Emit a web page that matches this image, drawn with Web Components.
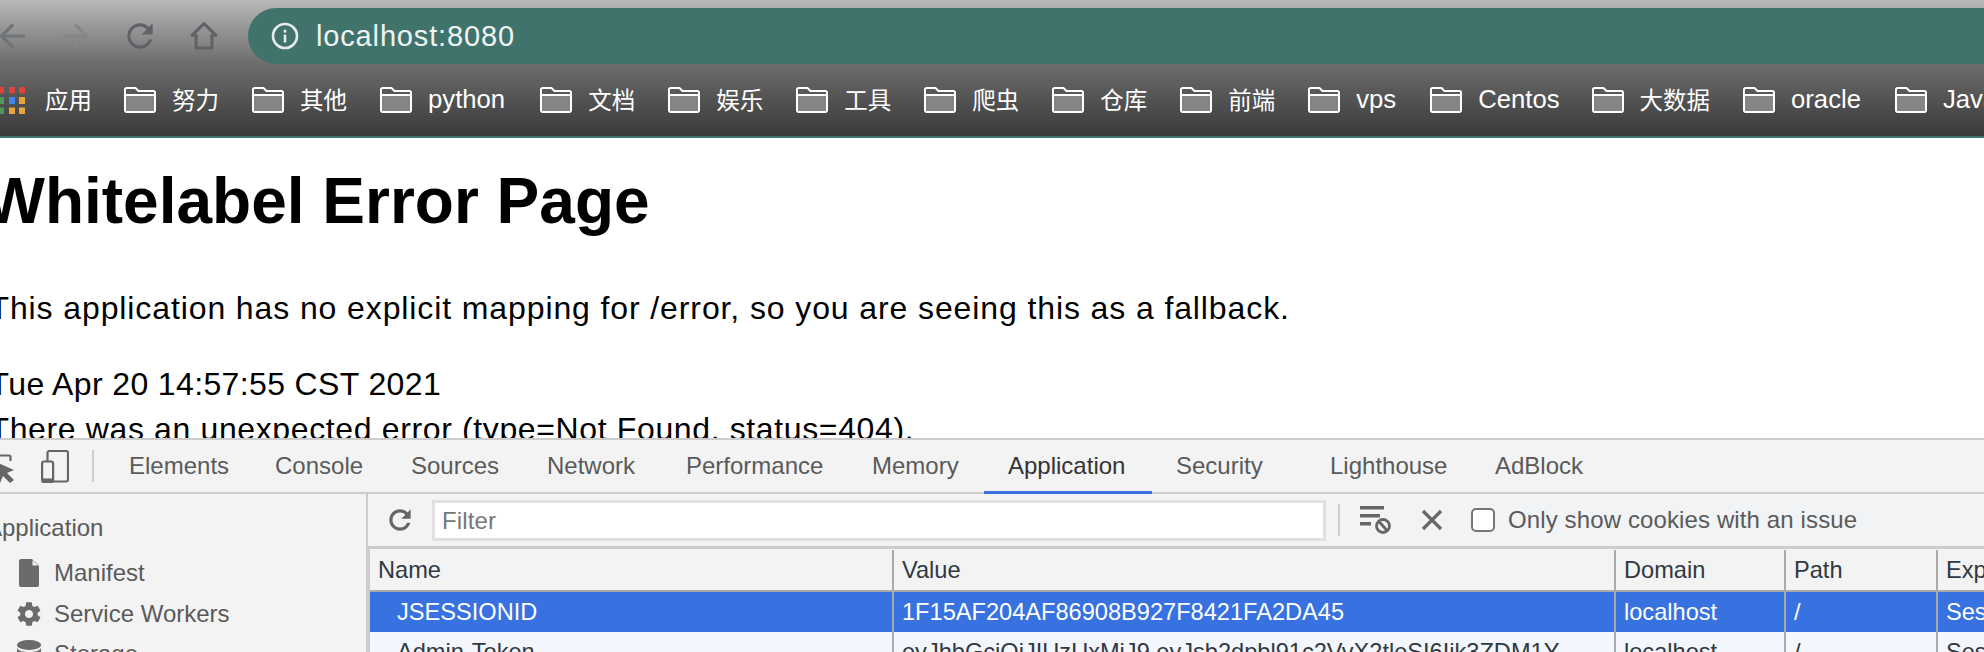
<!DOCTYPE html>
<html><head><meta charset="utf-8">
<style>
html,body{margin:0;padding:0;width:1984px;height:652px;overflow:hidden;background:#fff;font-family:"Liberation Sans","Noto Sans CJK SC",sans-serif}
body{display:flex;flex-direction:column}
</style></head><body>
<browser-chrome>
  <bm-item kind="apps" label="应用"></bm-item>
  <bm-item label="努力"></bm-item><bm-item label="其他"></bm-item><bm-item latin label="python"></bm-item><bm-item label="文档"></bm-item><bm-item label="娱乐"></bm-item><bm-item label="工具"></bm-item><bm-item label="爬虫"></bm-item><bm-item label="仓库"></bm-item><bm-item label="前端"></bm-item><bm-item latin style="margin-right:34px" label="vps"></bm-item><bm-item latin style="margin-right:32px" label="Centos"></bm-item><bm-item label="大数据"></bm-item><bm-item latin style="margin-right:34px" label="oracle"></bm-item><bm-item latin label="Java"></bm-item>
</browser-chrome>
<error-page></error-page>
<dev-tools></dev-tools>
<script>
class BrowserChrome extends HTMLElement{constructor(){super();this.attachShadow({mode:'open'}).innerHTML=`<style>
:host{display:block;height:136px;flex:none;border-bottom:2px solid #41736d;overflow:hidden;background:linear-gradient(#b8b8b8,#6c6c6c 47%,#393939)}
.top{display:flex;height:56px;padding-top:8px;margin-left:-20px}
.nav{width:64px;height:56px;display:flex;align-items:center;justify-content:center;flex:none}
.nav svg{width:38px;height:38px}
.bar{flex:1;margin-left:12px;background:#41736d;border-radius:28px 0 0 28px;display:flex;align-items:center;padding-left:23px;color:#eef3f2;font-size:29px;letter-spacing:.85px}
.bar svg{width:28px;height:28px;margin-right:17px;flex:none}
.marks{display:flex;height:72px;align-items:center;white-space:nowrap}
</style>
<div class="top">
<span class="nav"><svg viewBox="0 0 24 24"><path fill="#707377" d="M20 11H7.83l5.59-5.59L12 4l-8 8 8 8 1.41-1.41L7.83 13H20v-2z"/></svg></span>
<span class="nav"><svg viewBox="0 0 24 24"><path fill="#84868a" d="M12 4l-1.41 1.41L16.17 11H4v2h12.17l-5.58 5.59L12 20l8-8z"/></svg></span>
<span class="nav"><svg viewBox="0 0 24 24"><path fill="#5f6368" d="M17.65 6.35C16.2 4.9 14.21 4 12 4c-4.42 0-7.99 3.58-7.99 8s3.57 8 7.99 8c3.73 0 6.84-2.55 7.73-6h-2.08c-.82 2.33-3.04 4-5.65 4-3.31 0-6-2.69-6-6s2.69-6 6-6c1.66 0 3.14.69 4.22 1.78L13 11h7V4l-2.35 2.35z"/></svg></span>
<span class="nav"><svg viewBox="0 0 24 24"><path fill="none" stroke="#5f6368" stroke-width="1.9" stroke-linejoin="round" d="M12 4.2 4.4 11.6H7V19.6H17V11.6H19.6Z"/></svg></span>
<div class="bar"><svg viewBox="0 0 28 28"><circle cx="14" cy="14" r="12" fill="none" stroke="#e6ecea" stroke-width="2.6"/><rect x="12.7" y="12.5" width="2.6" height="8" fill="#e6ecea"/><rect x="12.7" y="7.8" width="2.6" height="2.8" fill="#e6ecea"/></svg><span>localhost:8080</span></div>
</div>
<div class="marks"><slot></slot></div>`}}
customElements.define('browser-chrome',BrowserChrome);

class BmItem extends HTMLElement{connectedCallback(){if(this.shadowRoot)return;
const apps=this.getAttribute('kind')==='apps';
const latin=this.hasAttribute('latin');
const icon=apps?`<svg class="apps" viewBox="0 0 25 27" width="25" height="27">
<rect x="-2" y="0" width="6" height="6.5" fill="#d9463c"/><rect x="9" y="0" width="6" height="6.5" fill="#d9463c"/><rect x="19" y="0" width="6" height="6.5" fill="#d9463c"/>
<rect x="-2" y="10" width="6" height="7" fill="#4f9a5b"/><rect x="9" y="10" width="6" height="7" fill="#3f86ea"/><rect x="19" y="10" width="6" height="7" fill="#e8a63a"/>
<rect x="-2" y="20.5" width="6" height="6.5" fill="#4f9a5b"/><rect x="9" y="20.5" width="6" height="6.5" fill="#e8a63a"/><rect x="19" y="20.5" width="6" height="6.5" fill="#e8a63a"/></svg>`
:`<svg viewBox="0 0 32 26" width="32" height="26"><path d="M2 8H30V23.5a1.5 1.5 0 0 1-1.500 1.500H2.500A1.500 1.500 0 0 1 1 23.500Z" fill="#858585"/><path fill="none" stroke="#fff" stroke-width="2" stroke-linejoin="round" d="M2.500 1H11.500L14.500 4H29.500A1.500 1.500 0 0 1 31 5.500V23.500A1.500 1.500 0 0 1 29.500 25H2.500A1.500 1.500 0 0 1 1 23.500V2.500A1.500 1.500 0 0 1 2.500 1ZM1 8H31"/></svg>`;
this.attachShadow({mode:'open'}).innerHTML=`<style>
:host{display:flex;align-items:center;gap:${apps?20:16}px;margin-right:${apps?32:latin?35:33}px;color:#fff;font-size:${latin?25.7:23.5}px;flex:none}
svg{flex:none;display:block}
span{margin-bottom:${latin?1:3}px}
</style>${icon}<span>${this.getAttribute('label')}</span>`}}
customElements.define('bm-item',BmItem);

class ErrorPage extends HTMLElement{constructor(){super();this.attachShadow({mode:'open'}).innerHTML=`<style>
:host{display:block;height:300px;flex:none;overflow:hidden;background:#fff;color:#000}
h1{margin:0 0 0 -15.5px;padding-top:26px;font-size:64px;line-height:74px;font-weight:700}
p{margin:0 0 0 -10.5px;font-size:32px;line-height:45px}
.a{margin-top:48px;letter-spacing:.89px}.b{margin-top:31px;letter-spacing:.37px}.c{letter-spacing:.63px}
</style><h1>Whitelabel Error Page</h1>
<p class="a">This application has no explicit mapping for /error, so you are seeing this as a fallback.</p>
<p class="b">Tue Apr 20 14:57:55 CST 2021</p><p class="c">There was an unexpected error (type=Not Found, status=404).</p>`}}
customElements.define('error-page',ErrorPage);

class DevTab extends HTMLElement{connectedCallback(){if(this.shadowRoot)return;this.attachShadow({mode:'open'}).innerHTML=`<style>
:host{display:flex;align-items:center;padding-left:24px;height:100%;box-sizing:border-box;color:#5a5a5a;flex:none}
:host([active]){color:#333;border-bottom:3px solid #3a70e0;height:54px;align-self:flex-start}
</style><slot></slot>`}}
customElements.define('dev-tab',DevTab);

class DevTools extends HTMLElement{constructor(){super();this.attachShadow({mode:'open'}).innerHTML=`<style>
:host{display:block;flex:1;min-height:0;overflow:hidden;background:#f3f3f3;font-size:24px;border-top:2px solid #ccc;color:#5a5a5a}
svg{display:block;flex:none}
.tabs{height:52px;display:flex;align-items:center;border-bottom:2px solid #ccc;white-space:nowrap}
.ic{display:flex;align-items:center;height:100%;margin-left:-20px;width:125px;flex:none}
.sep{width:2px;height:32px;background:#ccc;flex:none}
.main{display:grid;grid-template-columns:368px 1fr;height:200px}
.side{border-right:2px solid #ccc;padding-top:16px;white-space:nowrap}
.side .h{margin-left:-14px;height:36px;line-height:36px}
.it{display:flex;align-items:center;height:40.500px}
.it .g{width:54px;display:flex;justify-content:center;flex:none;padding-left:4px;box-sizing:border-box}
.it.first{margin-top:7px}
.tool{height:52px;display:flex;align-items:center;background:#f1f3f5;white-space:nowrap;letter-spacing:.12px}
.inp{width:894px;height:41px;box-sizing:border-box;border:3px solid #e0e0e0;background:#fff;color:#777;padding:1px 0 0 7px;display:flex;align-items:center;flex:none}
.tbl{border-top:3px solid #ccc;border-left:2px solid #ccc;color:#303942;white-space:nowrap;font-size:23.6px}
.r{display:grid;grid-template-columns:522px 722px 170px 152px 1fr}
.r>div{overflow:hidden;box-sizing:border-box;padding-left:8px;display:flex;align-items:center}
.r>div+div{border-left:2px solid #aaa}
.hd{height:40px;border-bottom:2px solid #aaa;padding-top:1px;box-sizing:content-box}
.sel{height:40px;background:#3871e0;color:#fff}
.alt{height:41px;background:#f3f7fd}
.n{padding-left:27px!important}
</style>
<div class="tabs"><div class="ic">
<svg width="34" height="34" viewBox="0 0 34 34"><path fill="none" stroke="#666" stroke-width="2.200" d="M0 6.500H29a1.500 1.500 0 0 1 1.500 1.500V12"/><path fill="#666" d="M14 12 L34 21 L27 24 L34 31 L30 34 L23 27 L20 34Z"/></svg>
<svg style="margin-left:27px" width="28" height="33" viewBox="0 0 28 33"><path fill="none" stroke="#666" stroke-width="2.200" d="M6.500 11V3a2 2 0 0 1 2-2H25a2 2 0 0 1 2 2V29.500a2 2 0 0 1-2 2H12"/><rect x="1.100" y="11.500" width="11" height="20.400" rx="2" fill="none" stroke="#666" stroke-width="2.200"/><rect x="1" y="28.500" width="11" height="4" fill="#666"/></svg>
<span class="sep" style="margin-left:23px"></span></div>
<dev-tab style="width:146px">Elements</dev-tab><dev-tab style="width:136px">Console</dev-tab><dev-tab style="width:136px">Sources</dev-tab><dev-tab style="width:139px">Network</dev-tab><dev-tab style="width:186px">Performance</dev-tab><dev-tab style="width:136px">Memory</dev-tab><dev-tab active style="width:168px">Application</dev-tab><dev-tab style="width:154px">Security</dev-tab><dev-tab style="width:165px">Lighthouse</dev-tab><dev-tab>AdBlock</dev-tab></div>
<div class="main"><div class="side"><div class="h">Application</div>
<div class="it first"><span class="g"><svg width="20" height="28" viewBox="0 0 20 28"><path fill="#6b6b6b" d="M2 0H13L20 7V26a2 2 0 0 1-2 2H2a2 2 0 0 1-2-2V2a2 2 0 0 1 2-2Z"/><path fill="#f3f3f3" d="M13.500 1 19 6.500H13.500Z"/></svg></span>Manifest</div>
<div class="it"><span class="g"><svg width="28" height="28" viewBox="0 0 24 24"><path fill="#6b6b6b" d="M19.430 12.980c.04-.32.07-.64.07-.98s-.03-.66-.07-.98l2.110-1.650c.19-.15.24-.42.12-.64l-2-3.460c-.12-.22-.39-.3-.61-.22l-2.490 1c-.52-.4-1.080-.73-1.690-.98l-.38-2.650C14.460 2.180 14.250 2 14 2h-4c-.25 0-.46.18-.49.42l-.38 2.650c-.61.25-1.170.59-1.690.98l-2.490-1c-.23-.09-.49 0-.61.22l-2 3.460c-.13.22-.07.49.12.64l2.110 1.650c-.04.32-.07.65-.07.98s.03.66.07.98l-2.110 1.650c-.19.15-.24.42-.12.64l2 3.460c.12.22.39.3.61.22l2.490-1c.52.4 1.080.73 1.690.98l.38 2.650c.03.24.24.42.49.42h4c.25 0 .46-.18.49-.42l.38-2.650c.61-.25 1.170-.59 1.690-.98l2.490 1c.23.09.49 0 .61-.22l2-3.460c.12-.22.07-.49-.12-.64l-2.110-1.650zM12 15.500c-1.930 0-3.500-1.570-3.500-3.500s1.570-3.500 3.500-3.500 3.500 1.570 3.500 3.500-1.570 3.500-3.500 3.500z"/></svg></span>Service Workers</div>
<div class="it"><span class="g"><svg width="24" height="28" viewBox="0 0 24 28"><ellipse cx="12" cy="5" rx="12" ry="5" fill="#6b6b6b"/><path fill="#6b6b6b" d="M0 8c2 3 5 4 12 4s10-1 12-4v6c-2 3-5 4-12 4S2 17 0 14Z"/></svg></span>Storage</div>
</div>
<div><div class="tool">
<svg style="margin-left:16px" width="32" height="32" viewBox="0 0 24 24"><path fill="#666" d="M17.650 6.350C16.200 4.900 14.210 4 12 4c-4.420 0-7.990 3.580-7.990 8s3.570 8 7.990 8c3.730 0 6.840-2.550 7.730-6h-2.500c-.82 2.330-2.620 3.600-5.230 3.600-3.100 0-5.600-2.500-5.600-5.600S8.900 6.400 12 6.400c1.660 0 2.900.6 4 1.700L13 11h7V4l-2.350 2.350z"/></svg>
<div class="inp" style="margin-left:16px">Filter</div>
<span class="sep" style="margin-left:12px"></span>
<svg style="margin-left:20px" width="31" height="29" viewBox="0 0 31 29"><path fill="#666" d="M0 0H24V3.500H0ZM0 8H20V11.500H0ZM0 16H11V19.500H0Z"/><circle cx="23" cy="20" r="6.500" fill="none" stroke="#666" stroke-width="2.800"/><path stroke="#666" stroke-width="2.800" d="M19 15.500 27 24.500"/></svg>
<svg style="margin-left:30px" width="22" height="22" viewBox="0 0 22 22"><path stroke="#666" stroke-width="3.200" d="M2 2 20 20M20 2 2 20"/></svg>
<span style="margin-left:28px;width:24px;height:24px;box-sizing:border-box;border:2px solid #767676;border-radius:5px;background:#fff;flex:none"></span>
<span style="margin-left:13px">Only show cookies with an issue</span>
</div>
<div class="tbl">
<div class="r hd"><div>Name</div><div>Value</div><div>Domain</div><div>Path</div><div>Expires</div></div>
<div class="r sel"><div class="n">JSESSIONID</div><div>1F15AF204AF86908B927F8421FA2DA45</div><div>localhost</div><div>/</div><div>Session</div></div>
<div class="r alt"><div class="n">Admin-Token</div><div>eyJhbGciOiJIUzUxMiJ9.eyJsb2dpbl91c2VyX2tleSI6Ijk3ZDM1Y</div><div>localhost</div><div>/</div><div>Session</div></div>
</div></div></div>`}}
customElements.define('dev-tools',DevTools);
</script>
</body></html>
